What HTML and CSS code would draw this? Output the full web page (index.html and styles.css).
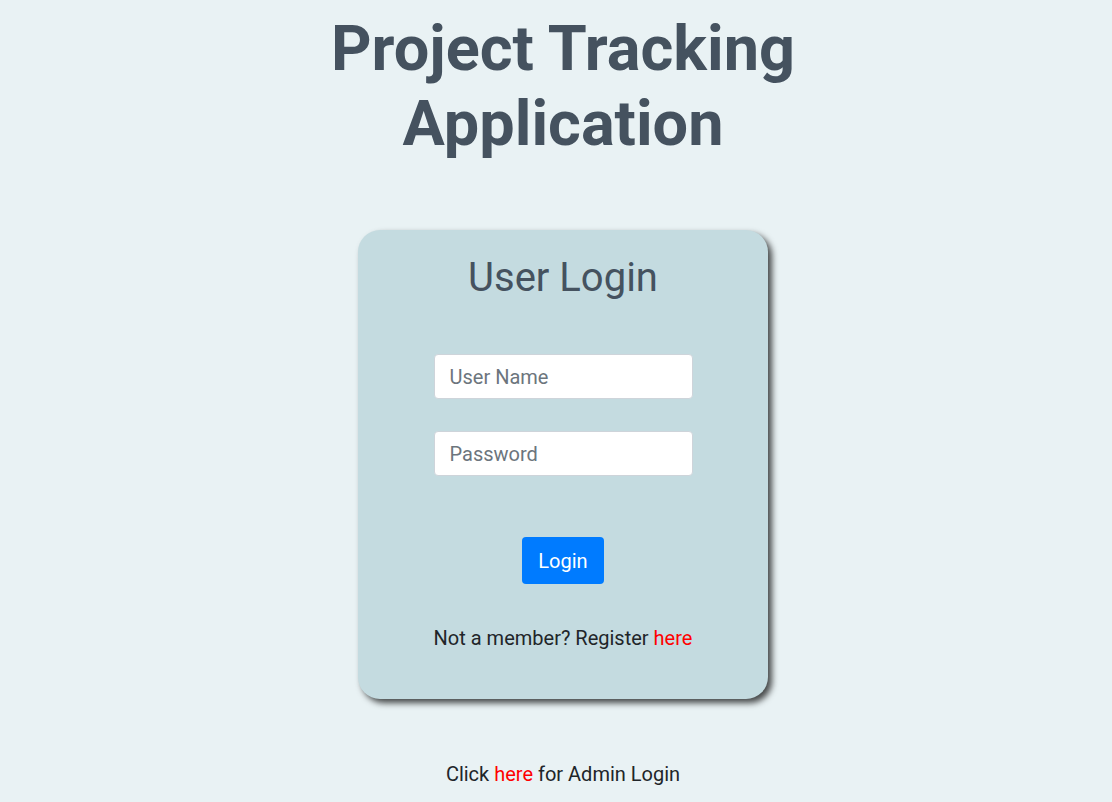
FILE: index.html
```html
<!DOCTYPE html>
<html>
<head>
<meta charset="utf-8">
<link rel="stylesheet" href="styles.css">
</head>
<body>
<main class="page">
  <h1 class="title">Project Tracking<br>Application</h1>
  <section class="card">
    <h2 class="card-title">User Login</h2>
    <form class="form">
      <input class="field" type="text" placeholder="User Name">
      <input class="field" type="password" placeholder="Password">
      <button class="btn" type="button">Login</button>
    </form>
    <p class="note">Not a member? Register <a class="link" href="#">here</a></p>
  </section>
  <p class="admin">Click <a class="link" href="#">here</a> for Admin Login</p>
</main>
</body>
</html>
```
FILE: styles.css
```css
html, body {
  margin: 0;
  padding: 0;
}
body {
  background: #e9f2f4;
  font-family: Roboto, "Liberation Sans", sans-serif;
  color: #212529;
  font-size: 20px;
}
.page {
  display: flex;
  flex-direction: column;
  align-items: center;
  padding-left: 14px;
}
.title {
  margin: 11px 0 0;
  font-size: 63px;
  line-height: 75px;
  font-weight: 700;
  color: #45525f;
  text-align: center;
}
.card {
  margin-top: 69px;
  width: 410px;
  box-sizing: border-box;
  background: #c4dbe0;
  border-radius: 22px;
  box-shadow: 4px 4px 6px rgba(0,0,0,0.7);
  display: flex;
  flex-direction: column;
  align-items: center;
  padding: 22px 0 49px;
}
.card-title {
  margin: 0;
  font-size: 40px;
  line-height: 52px;
  font-weight: 400;
  color: #45525f;
}
.form {
  margin-top: 50px;
  display: flex;
  flex-direction: column;
  align-items: center;
}
.field {
  width: 259px;
  height: 45px;
  box-sizing: border-box;
  border: 1px solid #ced4da;
  border-radius: 4px;
  background: #fff;
  padding: 0 15px;
  font-family: inherit;
  font-size: 20px;
  color: #495057;
  margin-bottom: 32px;
}
.field::placeholder {
  color: #6c757d;
}
.form .field + .field {
  margin-bottom: 61px;
}
.btn {
  width: 82px;
  height: 47px;
  border: none;
  border-radius: 4px;
  background: #007bff;
  color: #fff;
  font-family: inherit;
  font-size: 20px;
}
.note {
  margin: 42px 0 0;
  line-height: 24px;
}
.link {
  color: #ff0000;
  text-decoration: none;
}
.admin {
  margin: 63px 0 0;
  line-height: 24px;
}
```
